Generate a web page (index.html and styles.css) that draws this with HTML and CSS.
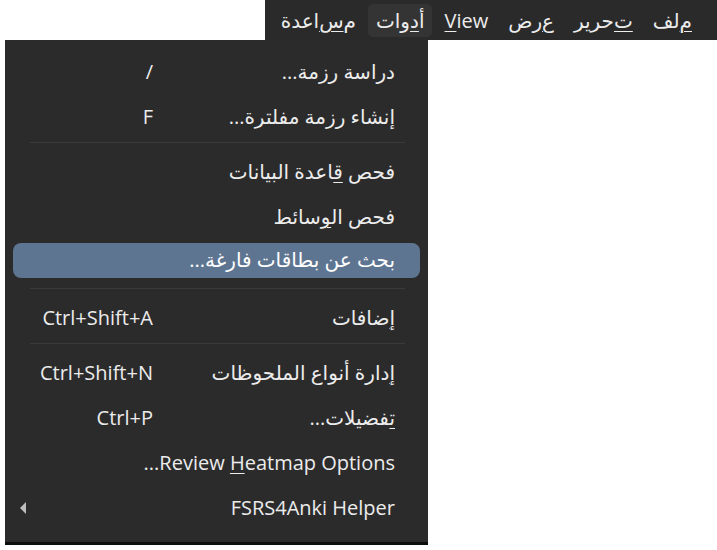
FILE: index.html
```html
<!DOCTYPE html>
<html lang="ar">
<head>
<meta charset="utf-8">
<link rel="stylesheet" href="styles.css">
</head>
<body>
<div class="page">
  <nav class="menubar" dir="rtl">
    <span class="mitem"><u>م</u>لف</span>
    <span class="mitem"><u>ت</u>حرير</span>
    <span class="mitem"><u>ع</u>رض</span>
    <span class="mitem" dir="ltr"><u>V</u>iew</span>
    <span class="mitem active">أ<u>د</u>وات</span>
    <span class="mitem">م<u>س</u>اعدة</span>
  </nav>
  <div class="menu" dir="rtl">
    <div class="row"><span class="label">دراسة رزمة...</span><span class="key">/</span></div>
    <div class="row"><span class="label">إنشاء رزمة مفلترة...</span><span class="key">F</span></div>
    <div class="sep"></div>
    <div class="row"><span class="label">فحص <u>ق</u>اعدة البيانات</span></div>
    <div class="row"><span class="label">فحص ال<u>و</u>سائط</span></div>
    <div class="row hl"><span class="label">بحث عن بطاقات فارغة...</span></div>
    <div class="sep"></div>
    <div class="row"><span class="label"><u>إ</u>ضافات</span><span class="key">Ctrl+Shift+A</span></div>
    <div class="sep"></div>
    <div class="row"><span class="label"><u>إ</u>دارة أنواع الملحوظات</span><span class="key">Ctrl+Shift+N</span></div>
    <div class="row"><span class="label"><u>ت</u>فضيلات...</span><span class="key">Ctrl+P</span></div>
    <div class="row"><span class="label" dir="ltr">...Review <u>H</u>eatmap Options</span></div>
    <div class="row"><span class="label" dir="ltr">FSRS4Anki Helper</span><span class="arrow"></span></div>
  </div>
</div>
</body>
</html>
```

FILE: styles.css
```css
html, body {
  margin: 0;
  padding: 0;
  background: #ffffff;
}
body {
  width: 717px;
  height: 550px;
  overflow: hidden;
  font-family: "Open Sans", "DejaVu Sans", sans-serif;
  font-size: 20px;
  color: #ececec;
}
.page {
  display: flex;
  flex-direction: column;
}
.menubar {
  align-self: flex-end;
  width: 452px;
  height: 40px;
  box-sizing: border-box;
  background: #2a2a2a;
  display: flex;
  align-items: center;
  padding: 0 17px 0 0;
  gap: 4px;
}
.mitem {
  height: 33px;
  display: flex;
  align-items: center;
  padding: 0 8px;
  border-radius: 5px;
  white-space: nowrap;
}
.mitem.active {
  background: #343434;
}
.menu {
  margin-left: 5px;
  width: 423px;
  height: 505px;
  box-sizing: border-box;
  background: #2b2b2b;
  border-bottom: 3px solid #0d0d0d;
  padding: 10px 8px 0 8px;
  display: flex;
  flex-direction: column;
}
.row {
  height: 45px;
  flex: none;
  display: flex;
  align-items: center;
  padding: 0 25px 2px 0;
  box-sizing: border-box;
  border-radius: 8px;
}
.row.hl {
  background: #5e7591;
  color: #ffffff;
  height: 35px;
  margin: 3px 0 8px;
}
.label {
  flex: 1;
  white-space: nowrap;
  text-align: right;
}
.key {
  width: 140px;
  text-align: right;
  direction: ltr;
  white-space: nowrap;
}
.arrow {
  width: 0;
  height: 0;
  border-top: 6px solid transparent;
  border-bottom: 6px solid transparent;
  border-right: 6px solid #bdbdbd;
  margin-left: 7px;
  margin-right: 20px;
}
.sep {
  flex: none;
  height: 1px;
  background: #3a3a3a;
  margin: 2px 15px 7px 17px;
}
u {
  text-decoration-thickness: 1px;
  text-underline-offset: 3px;
}
```
